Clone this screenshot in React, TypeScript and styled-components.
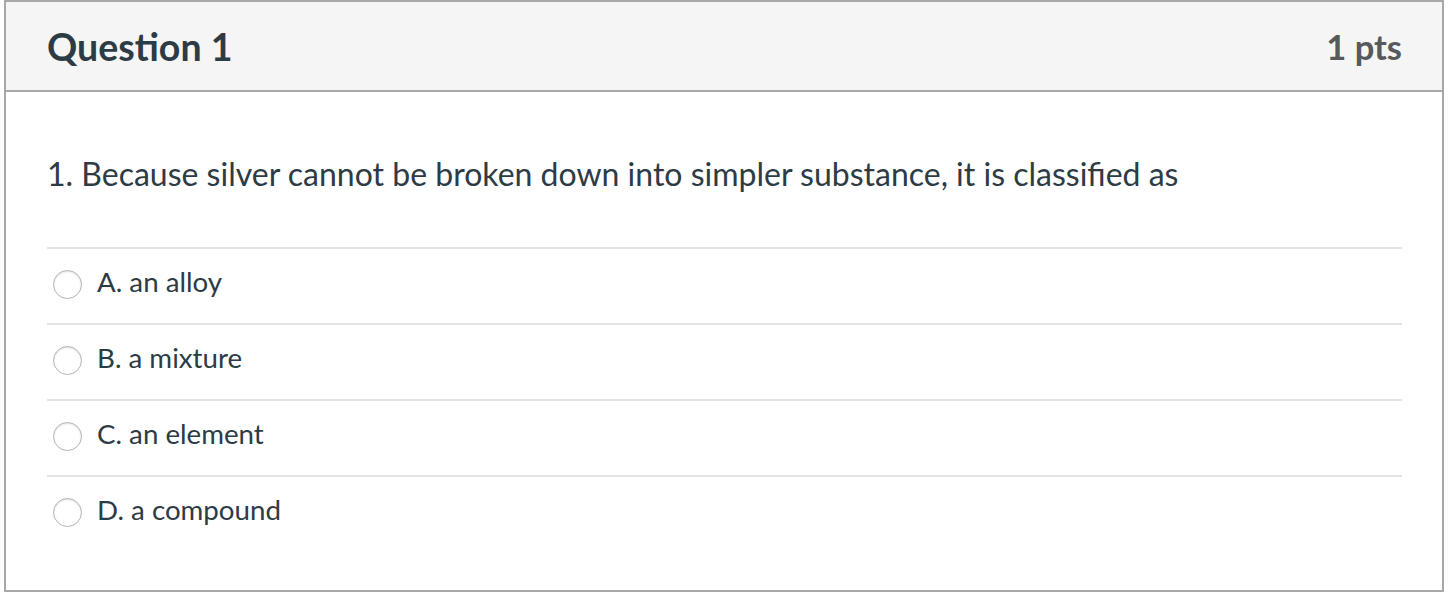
import React from 'react';
import styled, { createGlobalStyle } from 'styled-components';

const GlobalStyle = createGlobalStyle`
  html, body {
    margin: 0;
    padding: 0;
    background: #ffffff;
  }
  body {
    font-family: Lato, "Noto Sans", "Liberation Sans", sans-serif;
    color: #2d3b45;
  }
`;

const Card = styled.section`
  box-sizing: border-box;
  width: 1440px;
  height: 592px;
  margin-left: 4px;
  border: 2px solid #a8a8a8;
  background: #ffffff;
  display: flex;
  flex-direction: column;
`;

const Header = styled.header`
  box-sizing: border-box;
  height: 90px;
  display: flex;
  align-items: center;
  justify-content: space-between;
  padding: 0 40px 0 41px;
  background: #f5f5f5;
  border-bottom: 2px solid #a8a8a8;
`;

const Title = styled.h2`
  margin: 0;
  font-size: 37.5px;
  font-weight: 700;
  color: #2d3b45;
`;

const Points = styled.span`
  font-size: 34.5px;
  font-weight: 700;
  color: #58595b;
`;

const Body = styled.div`
  padding: 0 40px 0 41px;
`;

const QuestionText = styled.p`
  margin: 0;
  height: 155px;
  padding-top: 8px;
  box-sizing: border-box;
  display: flex;
  align-items: center;
  font-size: 32px;
  font-weight: 400;
`;

const AnswerList = styled.ul`
  list-style: none;
  margin: 0;
  padding: 0;
`;

const Answer = styled.li`
  box-sizing: border-box;
  height: 76px;
  display: flex;
  align-items: center;
  gap: 15px;
  padding: 0 0 10px 6px;
  border-top: 2px solid #e4e4e4;
  font-size: 27.7px;
  cursor: pointer;
`;

const Radio = styled.span`
  box-sizing: border-box;
  width: 29px;
  height: 29px;
  flex: none;
  margin-top: 6px;
  border-radius: 50%;
  border: 1px solid #b3b3b3;
  background: #ffffff;
  box-shadow: inset 0 1px 2px rgba(0, 0, 0, 0.12);
`;

const answers = ['A. an alloy', 'B. a mixture', 'C. an element', 'D. a compound'];

export default function App() {
  return (
    <>
      <GlobalStyle />
      <Card>
        <Header>
          <Title>Question 1</Title>
          <Points>1 pts</Points>
        </Header>
        <Body>
          <QuestionText>
            1. Because silver cannot be broken down into simpler substance, it is classified as
          </QuestionText>
          <AnswerList>
            {answers.map((a) => (
              <Answer key={a}>
                <Radio />
                {a}
              </Answer>
            ))}
          </AnswerList>
        </Body>
      </Card>
    </>
  );
}
